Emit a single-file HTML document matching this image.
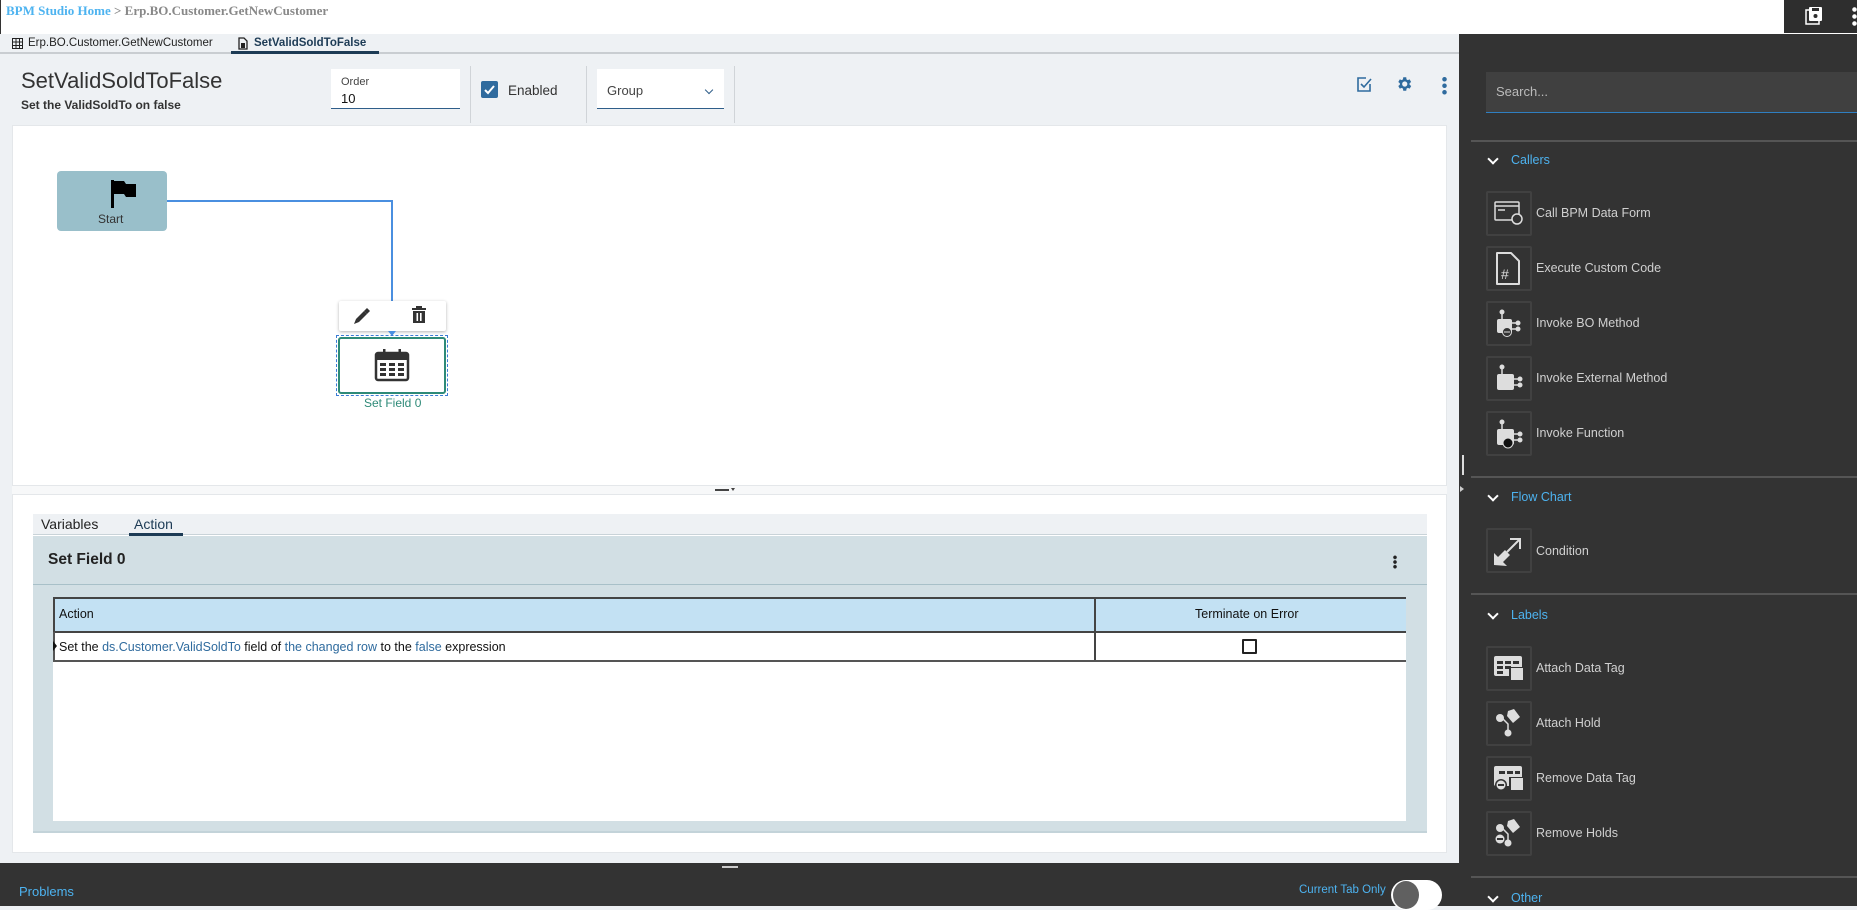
<!DOCTYPE html>
<html><head><meta charset="utf-8"><style>
*{box-sizing:border-box;margin:0;padding:0}
body{width:1857px;height:906px;overflow:hidden;background:#eef1f4;font-family:"Liberation Sans",sans-serif;position:relative}
.a{position:absolute}
.it{position:absolute;left:1486px;width:46px;height:45px;border:2px solid #414141;border-radius:2px}
.itt{position:absolute;left:1536px;color:#d0d0d0;font-size:12.5px}
.hd{position:absolute;left:1511px;color:#4db3f0;font-size:12.5px}
.chev{position:absolute;left:1489px;width:8px;height:8px;border-right:2.5px solid #fff;border-bottom:2.5px solid #fff;transform:rotate(45deg)}
.sep{position:absolute;left:1471px;right:0;height:2px;background:#555}
.bl{color:#2f6b9e}
</style></head><body>
<div class="a" style="left:0;top:0;width:1857px;height:34px;background:#fff"></div>
<div class="a" style="left:0;top:0;width:1px;height:34px;background:#333"></div>
<div class="a" style="left:6px;top:3px;font-family:'Liberation Serif',serif;font-weight:bold;font-size:13px;color:#888"><span style="color:#4db3f0">BPM Studio Home</span> &gt; Erp.BO.Customer.GetNewCustomer</div>
<div class="a" style="left:1784px;top:0;width:73px;height:33px;background:#2e2e2e"></div>
<svg class="a" style="left:1804px;top:6px" width="20" height="20" viewBox="0 0 20 20"><rect x="2" y="4" width="13" height="14" fill="none" stroke="#fff" stroke-width="1.5"/><rect x="5" y="1" width="13" height="14" rx="1" fill="#fff"/><rect x="8" y="2" width="7" height="3" fill="#2e2e2e"/><circle cx="11.5" cy="10" r="2" fill="#2e2e2e"/></svg>
<div class="a" style="left:1852px;top:6px;width:5px;height:20px;background:radial-gradient(circle,#fff 2px,transparent 2.5px) 0 0/5px 7px"></div>
<div class="a" style="left:0;top:34px;width:1459px;height:20px;background:#eef1f4;border-bottom:2px solid #c9cdd1"></div>
<svg class="a" style="left:12px;top:38px" width="12" height="13" viewBox="0 0 12 13"><rect x="0.5" y="0.5" width="10" height="10" fill="none" stroke="#222"/><path d="M0.5 4h10M0.5 7.5h10M4 0.5v10M7.5 0.5v10" stroke="#222"/></svg>
<div class="a" style="left:28px;top:37px;font-size:11.5px;color:#222">Erp.BO.Customer.GetNewCustomer</div>
<svg class="a" style="left:238px;top:37px" width="10" height="13" viewBox="0 0 10 13"><path d="M1 1h5l3 3v8H1z" fill="none" stroke="#222" stroke-width="1.3"/><rect x="3" y="6" width="4" height="5" fill="#222"/></svg>
<div class="a" style="left:254px;top:37px;font-size:11.5px;color:#1d3b55;font-weight:bold">SetValidSoldToFalse</div>
<div class="a" style="left:231px;top:51px;width:148px;height:3px;background:#1d3b55"></div>
<div class="a" style="left:21px;top:68px;font-size:22px;color:#333">SetValidSoldToFalse</div>
<div class="a" style="left:21px;top:98px;font-size:12px;color:#333;font-weight:bold">Set the ValidSoldTo on false</div>
<div class="a" style="left:331px;top:69px;width:129px;height:40px;background:#fff;border-bottom:1px solid #2f5e8a"></div>
<div class="a" style="left:341px;top:76px;font-size:11px;color:#444">Order</div>
<div class="a" style="left:341px;top:91px;font-size:13px;color:#111">10</div>
<div class="a" style="left:470px;top:66px;width:1px;height:57px;background:#d0d4d8"></div>
<div class="a" style="left:481px;top:81px;width:17px;height:17px;background:#2f6b9e;border-radius:2px"></div>
<svg class="a" style="left:483px;top:83px" width="13" height="13" viewBox="0 0 13 13"><path d="M2 7l3 3 6-7" fill="none" stroke="#fff" stroke-width="2"/></svg>
<div class="a" style="left:508px;top:83px;font-size:13.5px;color:#333">Enabled</div>
<div class="a" style="left:586px;top:66px;width:1px;height:57px;background:#d0d4d8"></div>
<div class="a" style="left:597px;top:69px;width:127px;height:40px;background:#fff;border-bottom:1px solid #2f5e8a"></div>
<div class="a" style="left:607px;top:83px;font-size:13px;color:#444">Group</div>
<div class="a" style="left:706px;top:87px;width:6px;height:6px;border-right:1.5px solid #2f5e8a;border-bottom:1.5px solid #2f5e8a;transform:rotate(45deg)"></div>
<div class="a" style="left:734px;top:66px;width:1px;height:57px;background:#d0d4d8"></div>
<svg class="a" style="left:1356px;top:76px" width="17" height="17" viewBox="0 0 17 17"><path d="M14 8v7H2V2h8" fill="none" stroke="#2f6b9e" stroke-width="1.6"/><path d="M5 8l3 3 7-8" fill="none" stroke="#2f6b9e" stroke-width="1.6"/></svg>
<svg class="a" style="left:1395px;top:75px" width="18" height="18" viewBox="0 0 24 24"><path fill="#2f6b9e" d="M19.4 13a7.5 7.5 0 0 0 0-2l2.1-1.6-2-3.5-2.5 1a7.5 7.5 0 0 0-1.7-1L15 3h-4l-.4 2.9a7.5 7.5 0 0 0-1.7 1l-2.5-1-2 3.5L6.5 11a7.5 7.5 0 0 0 0 2l-2.1 1.6 2 3.5 2.5-1a7.5 7.5 0 0 0 1.7 1L11 21h4l.4-2.9a7.5 7.5 0 0 0 1.7-1l2.5 1 2-3.5zM13 15.5a3.5 3.5 0 1 1 0-7 3.5 3.5 0 0 1 0 7z"/></svg>
<div class="a" style="left:1442px;top:76px;width:5px;height:19px;background:radial-gradient(circle,#2f6b9e 2px,transparent 2.5px) 0 0/5px 6.5px"></div>
<div class="a" style="left:12px;top:125px;width:1435px;height:361px;background:#fff;border:1px solid #e4e7ea"></div>
<div class="a" style="left:57px;top:171px;width:110px;height:60px;background:#99bfca;border-radius:4px"></div>
<svg class="a" style="left:108px;top:178px" width="30" height="32" viewBox="0 0 30 32"><path d="M3 2h3v28H3z" fill="#000"/><path d="M6 3h10l2 3h10v13H18l-2-3H6z" fill="#000"/></svg>
<div class="a" style="left:98px;top:212px;font-size:12px;color:#333">Start</div>
<div class="a" style="left:167px;top:200px;width:226px;height:2px;background:#4a8fe0"></div>
<div class="a" style="left:391px;top:200px;width:2px;height:101px;background:#4a8fe0"></div>
<div class="a" style="left:339px;top:301px;width:107px;height:30px;background:#fff;box-shadow:0 1px 3px rgba(0,0,0,.3);border-radius:2px"></div>
<svg class="a" style="left:352px;top:306px" width="20" height="20" viewBox="0 0 20 20"><path d="M2 18l2-5 8-8 3 3-8 8z" fill="#333"/><path d="M12 5l3-3 3 3-3 3z" fill="#333"/></svg>
<svg class="a" style="left:411px;top:306px" width="16" height="18" viewBox="0 0 16 18"><rect x="1" y="2" width="14" height="2" fill="#333"/><rect x="5" y="0" width="6" height="2" fill="#333"/><path d="M2 5h12v12H2z" fill="#333"/><rect x="5.5" y="7" width="1.6" height="8" fill="#fff"/><rect x="9" y="7" width="1.6" height="8" fill="#fff"/></svg>
<div class="a" style="left:388px;top:331px;width:0;height:0;border-left:4px solid transparent;border-right:4px solid transparent;border-top:5px solid #4a8fe0"></div>
<div class="a" style="left:336px;top:335px;width:112px;height:61px;border:1px dashed #3a7bd5"></div>
<div class="a" style="left:338px;top:337px;width:108px;height:57px;border:2px solid #2e8a78;border-radius:3px"></div>
<svg class="a" style="left:374px;top:348px" width="36" height="34" viewBox="0 0 36 34"><rect x="2" y="5" width="32" height="27" rx="2" fill="none" stroke="#333" stroke-width="2.5"/><rect x="2" y="5" width="32" height="7" fill="#333"/><rect x="9" y="1" width="2.5" height="8" fill="#333"/><rect x="24.5" y="1" width="2.5" height="8" fill="#333"/><g fill="#333"><rect x="6" y="15" width="6" height="3"/><rect x="15" y="15" width="6" height="3"/><rect x="24" y="15" width="6" height="3"/><rect x="6" y="20" width="6" height="3"/><rect x="15" y="20" width="6" height="3"/><rect x="24" y="20" width="6" height="3"/><rect x="6" y="25" width="6" height="3"/><rect x="15" y="25" width="6" height="3"/><rect x="24" y="25" width="6" height="3"/></g></svg>
<div class="a" style="left:364px;top:396px;font-size:12px;color:#2e8a78">Set Field 0</div>
<div class="a" style="left:12px;top:486px;width:1435px;height:8px;background:#f7f8f9"></div>
<div class="a" style="left:715px;top:489px;width:14px;height:2px;background:#444"></div>
<div class="a" style="left:731px;top:488px;border-left:2px solid transparent;border-right:2px solid transparent;border-top:3px solid #444"></div>
<div class="a" style="left:12px;top:494px;width:1435px;height:359px;background:#fff;border:1px solid #e4e7ea"></div>
<div class="a" style="left:33px;top:514px;width:1394px;height:21px;background:#eef1f4;border-bottom:1px solid #c9d3d8"></div>
<div class="a" style="left:41px;top:516px;font-size:14px;color:#222">Variables</div>
<div class="a" style="left:134px;top:516px;font-size:14px;color:#1d3b55">Action</div>
<div class="a" style="left:129px;top:533px;width:54px;height:3px;background:#1d3b55"></div>
<div class="a" style="left:33px;top:536px;width:1394px;height:297px;background:#d2dfe4;border-bottom:2px solid #c3d3d9"></div>
<div class="a" style="left:33px;top:584px;width:1394px;height:1px;background:#a8c0c8"></div>
<div class="a" style="left:48px;top:551px;font-size:15.5px;font-weight:bold;color:#222">Set Field 0</div>
<div class="a" style="left:1393px;top:555px;width:4px;height:14px;background:radial-gradient(circle,#222 1.6px,transparent 2px) 0 0/4px 4.7px"></div>
<div class="a" style="left:53px;top:597px;width:1353px;height:224px;background:#fff"></div>
<div class="a" style="left:53px;top:597px;width:1353px;height:36px;background:#c3e1f3;border:2px solid #444;border-right:none"></div>
<div class="a" style="left:1094px;top:597px;width:2px;height:64px;background:#444"></div>
<div class="a" style="left:59px;top:607px;font-size:12.5px;color:#111">Action</div>
<div class="a" style="left:1195px;top:607px;font-size:12.5px;color:#111">Terminate on Error</div>
<div class="a" style="left:53px;top:632px;width:1353px;height:30px;border:2px solid #555;border-top:none;border-right:none"></div>
<div class="a" style="left:53px;top:641px;border-top:5px solid transparent;border-bottom:5px solid transparent;border-left:4px solid #111"></div>
<div class="a" style="left:59px;top:640px;font-size:12.5px;color:#111">Set the <span class="bl">ds.Customer.ValidSoldTo</span> field of <span class="bl">the changed row</span> to the <span class="bl">false</span> expression</div>
<div class="a" style="left:1242px;top:639px;width:15px;height:15px;border:2px solid #222;border-radius:1px"></div>
<div class="a" style="left:0;top:863px;width:1459px;height:43px;background:#333"></div>
<div class="a" style="left:722px;top:866px;width:16px;height:2px;background:#ccc"></div>
<div class="a" style="left:19px;top:884px;font-size:13px;color:#4db3f0">Problems</div>
<div class="a" style="left:1299px;top:884px;font-size:11.5px;color:#4db3f0">Current Tab Only</div>
<div class="a" style="left:1391px;top:880px;width:51px;height:30px;background:#fff;border-radius:15px"></div>
<div class="a" style="left:1393px;top:881px;width:26px;height:28px;background:#606060;border-radius:50%"></div>
<div class="a" style="left:1459px;top:34px;width:398px;height:872px;background:#333"></div>
<div class="a" style="left:1462px;top:455px;width:2px;height:20px;background:#ddd"></div>
<div class="a" style="left:1460px;top:486px;border-top:3px solid transparent;border-bottom:3px solid transparent;border-left:4px solid #ccc"></div>
<div class="a" style="left:1486px;top:72px;width:371px;height:41px;background:#404040;border-bottom:1px solid #2f7fc1"></div>
<div class="a" style="left:1496px;top:84px;font-size:13px;color:#bbb">Search...</div>
<div class="sep" style="top:140px"></div>
<div class="chev" style="top:155px"></div><div class="hd" style="top:153px">Callers</div>
<div class="it" style="top:191px"></div><div class="itt" style="top:206px">Call BPM Data Form</div>
<svg class="a" style="left:1494px;top:201px" width="32" height="26" viewBox="0 0 32 26"><rect x="1" y="1" width="24" height="18" rx="1" fill="none" stroke="#ddd" stroke-width="1.5"/><path d="M1 5h24M4 9h7" stroke="#ddd" stroke-width="1.5"/><circle cx="23" cy="18" r="5" fill="#333" stroke="#ddd" stroke-width="1.5"/></svg>
<div class="it" style="top:246px"></div><div class="itt" style="top:261px">Execute Custom Code</div>
<svg class="a" style="left:1494px;top:251px" width="30" height="36" viewBox="0 0 30 36"><path d="M3 2h14l8 8v23H3z" fill="none" stroke="#ddd" stroke-width="2" stroke-linejoin="round"/><text x="7" y="28" font-family="Liberation Sans" font-size="14" fill="#ddd">#</text></svg>
<div class="it" style="top:301px"></div><div class="itt" style="top:316px">Invoke BO Method</div>
<svg class="a" style="left:1494px;top:308px" width="30" height="32" viewBox="0 0 30 32"><circle cx="8" cy="4" r="2.5" fill="#ddd"/><path d="M8 6v5" stroke="#ddd" stroke-width="1.5"/><rect x="3" y="11" width="15" height="14" rx="2" fill="#ddd"/><circle cx="24" cy="15" r="2.5" fill="#ddd"/><circle cx="24" cy="21" r="2.5" fill="#ddd"/><path d="M18 15h4M18 21h4" stroke="#ddd" stroke-width="1.5"/><circle cx="13" cy="24" r="4.5" fill="#333" stroke="#ddd"/><path d="M10 24h6" stroke="#ddd"/></svg>
<div class="it" style="top:356px"></div><div class="itt" style="top:371px">Invoke External Method</div>
<svg class="a" style="left:1494px;top:363px" width="30" height="32" viewBox="0 0 30 32"><circle cx="8" cy="4" r="2.5" fill="#ddd"/><path d="M8 6v5" stroke="#ddd" stroke-width="1.5"/><rect x="3" y="11" width="17" height="16" rx="2" fill="#ddd"/><circle cx="26" cy="16" r="2.5" fill="#ddd"/><circle cx="26" cy="22" r="2.5" fill="#ddd"/><path d="M20 16h4M20 22h4" stroke="#ddd" stroke-width="1.5"/></svg>
<div class="it" style="top:411px"></div><div class="itt" style="top:426px">Invoke Function</div>
<svg class="a" style="left:1494px;top:418px" width="30" height="32" viewBox="0 0 30 32"><circle cx="8" cy="4" r="2.5" fill="#ddd"/><path d="M8 6v5" stroke="#ddd" stroke-width="1.5"/><rect x="3" y="11" width="17" height="16" rx="2" fill="#ddd"/><circle cx="26" cy="16" r="2.5" fill="#ddd"/><circle cx="26" cy="22" r="2.5" fill="#ddd"/><path d="M20 16h4M20 22h4" stroke="#ddd" stroke-width="1.5"/><circle cx="14" cy="25" r="5" fill="#111" stroke="#ddd"/></svg>
<div class="sep" style="top:476px"></div>
<div class="chev" style="top:492px"></div><div class="hd" style="top:490px">Flow Chart</div>
<div class="it" style="top:528px"></div><div class="itt" style="top:544px">Condition</div>
<svg class="a" style="left:1492px;top:535px" width="32" height="32" viewBox="0 0 32 32"><path d="M2 30V18l4 4 7-7 5 5-7 7 4 4z" fill="#ddd"/><path d="M15 17l12-12M18 4h10v10" fill="none" stroke="#ddd" stroke-width="2"/></svg>
<div class="sep" style="top:593px"></div>
<div class="chev" style="top:610px"></div><div class="hd" style="top:608px">Labels</div>
<div class="it" style="top:646px"></div><div class="itt" style="top:661px">Attach Data Tag</div>
<svg class="a" style="left:1493px;top:654px" width="32" height="30" viewBox="0 0 32 30"><rect x="1" y="2" width="28" height="20" rx="2" fill="#ddd"/><g fill="#333"><rect x="4" y="7" width="6" height="3"/><rect x="12" y="7" width="6" height="3"/><rect x="20" y="7" width="6" height="3"/><rect x="4" y="12" width="6" height="3"/><rect x="12" y="12" width="6" height="3"/><rect x="4" y="17" width="6" height="3"/></g><rect x="16" y="13" width="14" height="14" fill="#333"/><rect x="18" y="14" width="12" height="12" fill="#ddd"/></svg>
<div class="it" style="top:701px"></div><div class="itt" style="top:716px">Attach Hold</div>
<svg class="a" style="left:1494px;top:707px" width="30" height="32" viewBox="0 0 30 32"><circle cx="6" cy="11" r="4" fill="#ddd"/><path d="M14 4l6-2 6 8-7 6-6-7z" fill="#ddd"/><path d="M9 12l5 5v8" stroke="#ddd" stroke-width="1.5" fill="none"/><circle cx="14" cy="26" r="3.5" fill="#ddd"/></svg>
<div class="it" style="top:756px"></div><div class="itt" style="top:771px">Remove Data Tag</div>
<svg class="a" style="left:1493px;top:764px" width="32" height="30" viewBox="0 0 32 30"><rect x="1" y="2" width="28" height="20" rx="2" fill="#ddd"/><g fill="#333"><rect x="6" y="7" width="6" height="3"/><rect x="14" y="7" width="6" height="3"/><rect x="22" y="7" width="5" height="3"/></g><rect x="16" y="13" width="14" height="14" fill="#333"/><rect x="18" y="14" width="12" height="12" fill="#ddd"/><circle cx="8" cy="21" r="6" fill="#333"/><circle cx="8" cy="21" r="4.5" fill="#ddd"/><rect x="5" y="20" width="6" height="2" fill="#333"/></svg>
<div class="it" style="top:811px"></div><div class="itt" style="top:826px">Remove Holds</div>
<svg class="a" style="left:1494px;top:817px" width="30" height="32" viewBox="0 0 30 32"><circle cx="6" cy="11" r="4" fill="#ddd"/><path d="M14 4l6-2 6 8-7 6-6-7z" fill="#ddd"/><path d="M9 12l5 5v8" stroke="#ddd" stroke-width="1.5" fill="none"/><circle cx="14" cy="26" r="3.5" fill="#ddd"/><circle cx="6" cy="22" r="4.5" fill="#ddd"/><rect x="3" y="21" width="6" height="2" fill="#333"/></svg>
<div class="sep" style="top:876px"></div>
<div class="chev" style="top:893px"></div><div class="hd" style="top:891px">Other</div>
</body></html>
